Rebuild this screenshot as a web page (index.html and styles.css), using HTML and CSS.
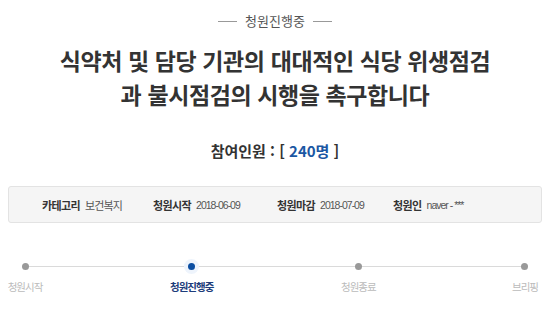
FILE: index.html
```html
<!DOCTYPE html>
<html lang="ko">
<head>
<meta charset="utf-8">
<link rel="stylesheet" href="styles.css">
</head>
<body>
<div class="page">
  <div class="status"><span class="rule"></span><span class="status-text">청원진행중</span><span class="rule"></span></div>
  <h1 class="title">식약처 및 담당 기관의 대대적인 식당 위생점검<br>과 불시점검의 시행을 촉구합니다</h1>
  <div class="count">참여인원 : [ <span class="num">240명</span> ]</div>
  <div class="info">
    <div class="item"><span class="k">카테고리</span><span class="v">보건복지</span></div>
    <div class="item"><span class="k">청원시작</span><span class="v date">2018-06-09</span></div>
    <div class="item"><span class="k">청원마감</span><span class="v date">2018-07-09</span></div>
    <div class="item"><span class="k">청원인</span><span class="v date">naver - ***</span></div>
  </div>
  <div class="steps">
    <div class="step"><span class="dot"></span><span class="label">청원시작</span></div>
    <div class="step active"><span class="dot"></span><span class="label">청원진행중</span></div>
    <div class="step"><span class="dot"></span><span class="label">청원종료</span></div>
    <div class="step"><span class="dot"></span><span class="label">브리핑</span></div>
  </div>
</div>
</body>
</html>
```

FILE: styles.css
```css
html, body {
  margin: 0;
  padding: 0;
  background: #fff;
}
body {
  font-family: "Noto Sans CJK KR", "Noto Sans", sans-serif;
  color: #333;
}
.page {
  width: 550px;
}
.status {
  display: flex;
  justify-content: center;
  align-items: center;
  gap: 8px;
  padding-top: 12px;
  height: 18px;
}
.rule {
  display: block;
  width: 19px;
  height: 1px;
  background: #999;
}
.status-text {
  font-size: 13px;
  line-height: 18px;
  color: #555;
}
.title {
  margin: 13px 0 0;
  text-align: center;
  font-size: 23px;
  line-height: 34px;
  font-weight: 700;
  color: #333;
  letter-spacing: -0.4px;
}
.count {
  margin-top: 30px;
  text-align: center;
  font-size: 15px;
  line-height: 20px;
  font-weight: 700;
  color: #333;
}
.count .num {
  color: #1b57a3;
}
.info {
  margin: 25px 8px 0;
  height: 35px;
  border: 1px solid #e3e3e3;
  border-radius: 3px;
  background: #f5f5f5;
  display: flex;
  align-items: center;
  padding-left: 33px;
  font-size: 11px;
}
.item {
  display: flex;
  align-items: center;
  gap: 5px;
}
.item:nth-child(1) { width: 111px; }
.item:nth-child(2) { width: 124px; }
.item:nth-child(3) { width: 116px; }
.k {
  font-weight: 700;
  color: #333;
  letter-spacing: -0.6px;
}
.v {
  color: #555;
  letter-spacing: -0.9px;
}
.date {
  font-family: "Liberation Sans", sans-serif;
  letter-spacing: -1px;
  font-size: 10.5px;
}
.steps {
  margin: 37px 25px 0 25px;
  display: flex;
  justify-content: space-between;
  background: linear-gradient(#dadada, #dadada) no-repeat 0 6px / 100% 1px;
}
.step {
  width: 0;
  display: flex;
  flex-direction: column;
  align-items: center;
}
.dot {
  display: block;
  width: 7px;
  height: 7px;
  margin-top: 3px;
  border-radius: 50%;
  background: #999;
  flex: none;
}
.step.active .dot {
  background: #0b4ea2;
  box-shadow: 0 0 0 4px #eef4fc;
}
.label {
  margin-top: 10px;
  white-space: nowrap;
  font-size: 10.5px;
  line-height: 14px;
  letter-spacing: -1px;
  color: #bbb;
}
.step.active .label {
  color: #1e3d7b;
  font-weight: 700;
}
```
